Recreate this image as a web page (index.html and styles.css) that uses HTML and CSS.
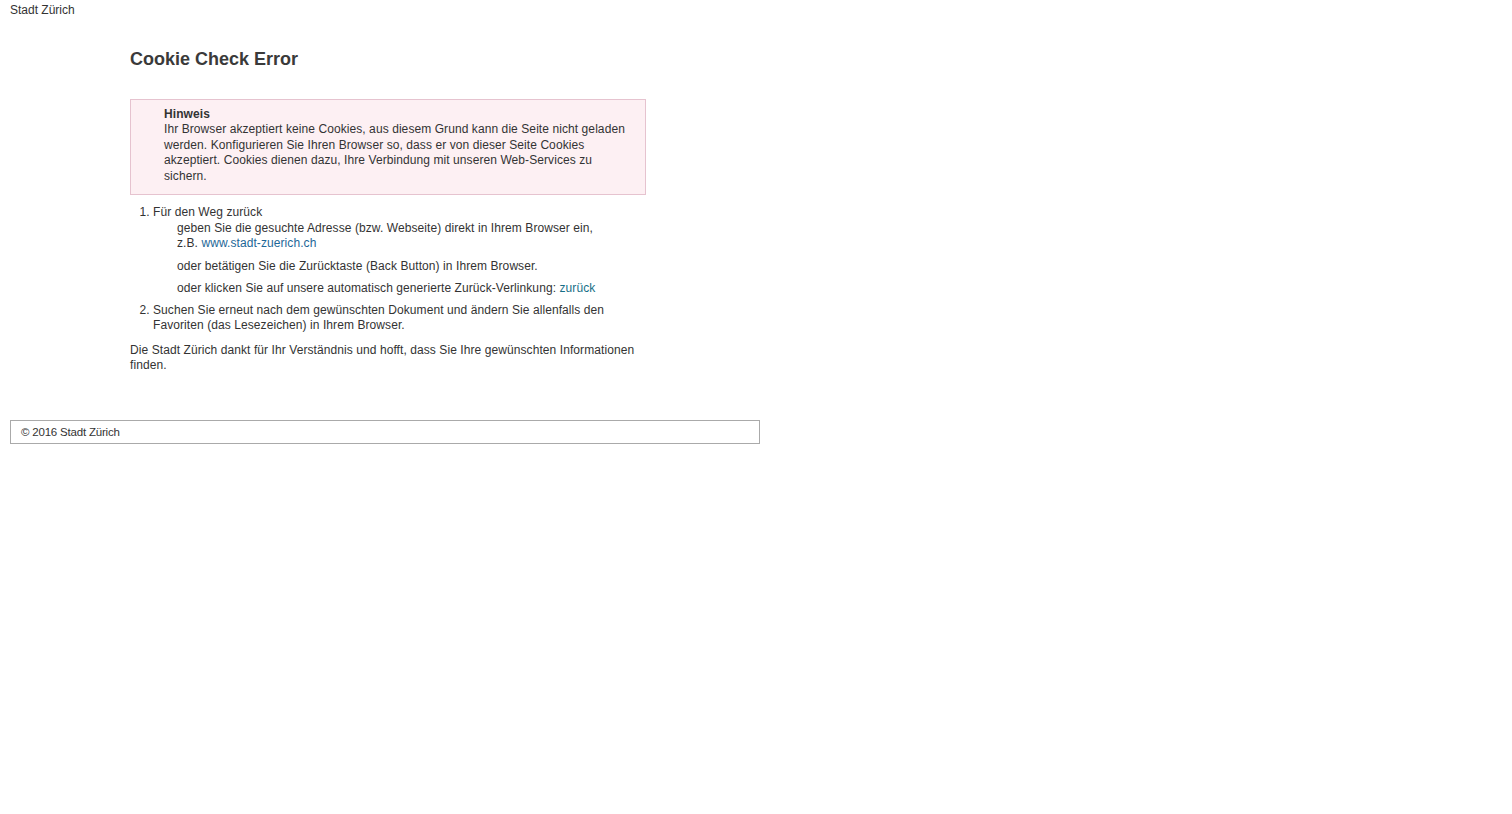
FILE: index.html
```html
<!DOCTYPE html>
<html lang="de">
<head>
  <meta charset="UTF-8" />
  <title>Cookie Check Error</title>
  <link rel="stylesheet" href="styles.css">
</head>
<body>
<div class="top">Stadt Zürich</div>
<div class="content">
  <h1>Cookie Check Error</h1>
  <!-- Hinweis -->
  <div class="notice">
    <strong>Hinweis</strong><br>
    Ihr Browser akzeptiert keine Cookies, aus diesem Grund kann die Seite nicht geladen werden. Konfigurieren Sie Ihren Browser so, dass er von dieser Seite Cookies akzeptiert. Cookies dienen dazu, Ihre Verbindung mit unseren Web-Services zu sichern.
  </div>
  <ol class="steps">
    <li>Für den Weg zurück
      <p class="sub first">geben Sie die gesuchte Adresse (bzw. Webseite) direkt in Ihrem Browser ein,<br>z.B. <a href="#">www.stadt-zuerich.ch</a></p>
      <p class="sub">oder betätigen Sie die Zurücktaste (Back Button) in Ihrem Browser.</p>
      <p class="sub">oder klicken Sie auf unsere automatisch generierte Zurück-Verlinkung: <a href="#" class="back">zurück</a></p>
    </li>
    <li>Suchen Sie erneut nach dem gewünschten Dokument und ändern Sie allenfalls den Favoriten (das Lesezeichen) in Ihrem Browser.</li>
  </ol>
  <p class="thanks">Die Stadt Zürich dankt für Ihr Verständnis und hofft, dass Sie Ihre gewünschten Informationen finden.</p>
</div>
<div class="footer">© 2016 Stadt Zürich</div>
</body>
</html>
```

FILE: styles.css
```css
body {
  margin: 0;
  font-family: 'Liberation Sans', Arial, sans-serif;
  font-size: 12px;
  line-height: 15.5px;
  color: #333;
  background: #fff;
}
.top {
  padding: 3px 10px 0;
  color: #333;
}
.content {
  margin-left: 130px;
  width: 516px;
  letter-spacing: 0.08px;
}
h1 {
  font-size: 18px;
  line-height: 22px;
  margin: 29px 0 29px;
  color: #3a3a3a;
  letter-spacing: 0;
}
.notice {
  background: #fdf0f3;
  border: 1px solid #e6c3cf;
  padding: 7px 20px 10px 33px;
}
.notice strong {
  color: #333;
}
.steps {
  margin: 10px 0 0;
  padding-left: 23px;
}
.steps li {
  margin: 0;
}
.sub {
  margin: 7px 0 0 24px;
}
.sub.first {
  margin-top: 0;
}
.steps li + li {
  margin-top: 6px;
}
a {
  color: #1d6797;
  text-decoration: none;
}
a.back {
  color: #176f87;
}
.thanks {
  margin: 9px 0 0;
}
.footer {
  margin: 46px 0 0 10px;
  border: 1px solid #aaa;
  padding: 4px 10px 4px;
  box-sizing: border-box;
  width: 750px;
  font-size: 11.5px;
  line-height: 14px;
  letter-spacing: -0.2px;
}
```
